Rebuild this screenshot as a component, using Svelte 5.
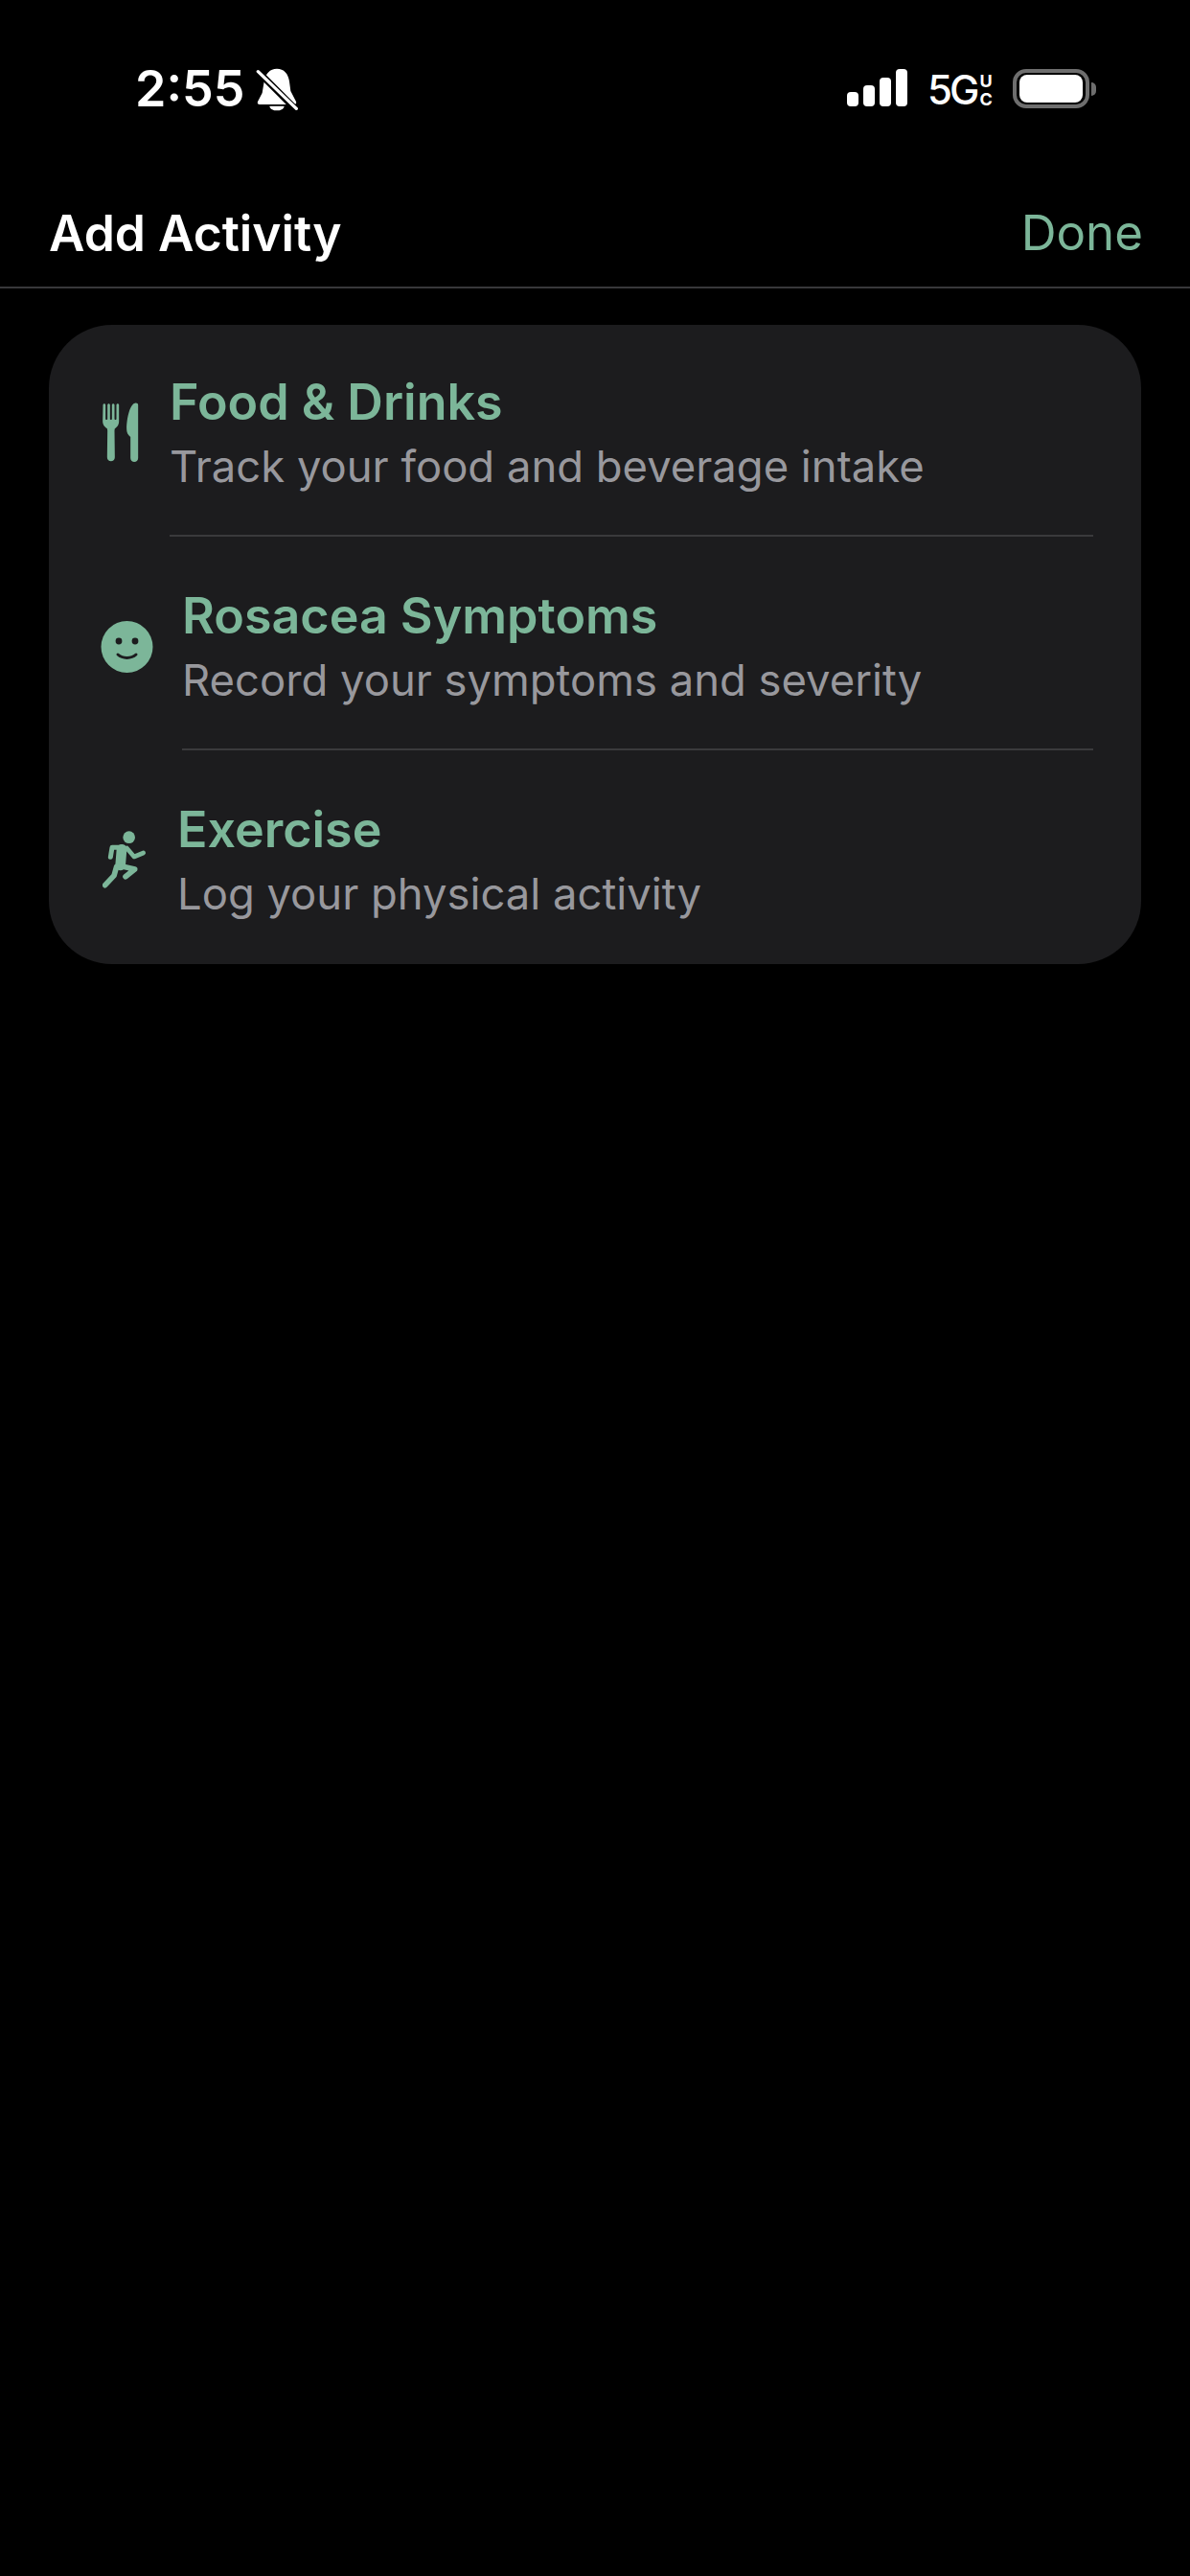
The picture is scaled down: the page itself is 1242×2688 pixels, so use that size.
<script lang="ts">
	const rows = [
		{ title: "Food & Drinks", sub: "Track your food and beverage intake", icon: "fork" },
		{ title: "Rosacea Symptoms", sub: "Record your symptoms and severity", icon: "smile" },
		{ title: "Exercise", sub: "Log your physical activity", icon: "run" }
	];
</script>

<div class="screen">
	<div class="status">
		<div class="left">
			<span class="time">2:55</span>
			<svg class="bell" viewBox="500 90 135 135">
				<path d="M566 92c22 0 36 16 39 40l4 30 17 33c2 5 0 9-6 9H512c-6 0-8-4-6-9l14-27 6-36c4-24 18-40 40-40z" fill="#fff" />
				<path d="M543 209h46c-2 10-12 14-23 14s-21-4-23-14z" fill="#fff" />
				<path d="M498 92L630 224" stroke="#000" stroke-width="21" />
				<path d="M507 101L627 217" stroke="#fff" stroke-width="10" stroke-linecap="round" />
			</svg>
		</div>
		<div class="right">
			<div class="signal">
				<i class="b1"></i><i class="b2"></i><i class="b3"></i><i class="b4"></i>
			</div>
			<div class="net">
				<span class="fiveg">5G</span>
				<span class="uc"><span>U</span><span>C</span></span>
			</div>
			<div class="battery"><div class="cell"><div class="charge"></div></div><div class="nub"></div></div>
		</div>
	</div>

	<header>
		<h1>Add Activity</h1>
		<span class="done">Done</span>
	</header>

	<main>
		<section class="card">
			{#each rows as row}
				<div class="row {row.icon}">
					<div class="icon">
						{#if row.icon === "fork"}
							<svg width="38" height="62" viewBox="232 297 111 186">
								<path d="M232 305c0-6 8-6 8 0v44c0 3 6 3 6 0v-44c0-6 8-6 8 0v44c0 3 6 3 6 0v-44c0-6 8-6 8 0v44c0 3 6 3 6 0v-44c0-6 8-6 8 0v50c0 14-7 20-13 24l-1 6 1 84c0 16-24 16-24 0l1-84-1-6c-6-4-14-10-14-24z" fill="currentColor" />
								<path d="M342 305v166c0 16-24 16-24 0v-66c-8-6-12-14-12-24 0-40 12-80 26-82 6-1 10 1 10 6z" fill="currentColor" />
							</svg>
						{:else if row.icon === "smile"}
							<svg width="55" height="56" viewBox="0 0 55 56">
								<circle cx="27.500" cy="28" r="27" fill="currentColor" />
								<circle cx="19" cy="22" r="3.400" fill="#1c1c1e" />
								<circle cx="36" cy="22" r="3.400" fill="#1c1c1e" />
								<path d="M18 36c5 4.500 14 4.500 19 0" fill="none" stroke="#1c1c1e" stroke-width="3" stroke-linecap="round" />
							</svg>
						{:else}
							<svg width="46" height="60" viewBox="232 230 138 180">
								<circle cx="315" cy="250" r="19" fill="currentColor" />
								<g fill="none" stroke="currentColor" stroke-linecap="round" stroke-linejoin="round">
									<path d="M298 282H262L257 312" stroke-width="15" />
									<path d="M308 284L331 311L360 299" stroke-width="14" />
									<path d="M292 288L288 338" stroke-width="32" />
									<path d="M290 340L333 350L304 373" stroke-width="17" />
									<path d="M276 342L268 370L240 400" stroke-width="17" />
								</g>
							</svg>
						{/if}
					</div>
					<div class="text">
						<div class="title">{row.title}</div>
						<div class="sub">{row.sub}</div>
					</div>
				</div>
			{/each}
		</section>
	</main>
</div>

<style>
	:global(body) {
		background: #000;
	}

	.screen {
		width: 1242px;
		height: 2688px;
		background: #000;
		font-family: Inter, "Liberation Sans", sans-serif;
		overflow: hidden;
	}

	.status {
		height: 186px;
		box-sizing: border-box;
		padding: 72px 98px 0 141px;
		display: flex;
		justify-content: space-between;
		align-items: flex-start;
		color: #fff;
	}

	.left {
		display: flex;
		align-items: center;
		gap: 12px;
		height: 42px;
	}

	.time {
		font-size: 52px;
		font-weight: 600;
		line-height: 42px;
	}

	.bell {
		width: 45px;
		height: 45px;
	}

	.right {
		display: flex;
		align-items: flex-start;
	}

	.signal {
		display: flex;
		align-items: flex-end;
		gap: 5px;
		height: 39px;
		width: 63px;
	}

	.signal i {
		width: 12px;
		background: #fff;
		border-radius: 4px;
	}

	.b1 { height: 15px; }
	.b2 { height: 22px; }
	.b3 { height: 30px; }
	.b4 { height: 39px; }

	.net {
		display: flex;
		margin-left: 21px;
		margin-top: 5px;
		gap: 3px;
		height: 34px;
		width: 89px;
	}

	.fiveg {
		font-size: 42px;
		font-weight: 500;
		line-height: 34px;
		letter-spacing: -3px;
	}

	.uc {
		display: flex;
		flex-direction: column;
		justify-content: space-between;
		font-size: 18px;
		font-weight: 700;
		line-height: 15px;
	}

	.battery {
		display: flex;
		align-items: center;
		height: 41px;
	}

	.cell {
		width: 80px;
		height: 41px;
		box-sizing: border-box;
		border: 4px solid #6e6e6e;
		border-radius: 14px;
		padding: 2px 3px;
	}

	.charge {
		height: 100%;
		background: #fff;
		border-radius: 8px;
	}

	.nub {
		width: 5px;
		height: 14px;
		margin-left: 2px;
		background: #6e6e6e;
		border-radius: 0 7px 7px 0;
	}

	header {
		height: 115px;
		box-sizing: border-box;
		display: flex;
		justify-content: space-between;
		align-items: center;
		padding: 0 49px 0 51px;
		border-bottom: 2px solid #38383a;
	}

	h1 {
		margin: 0;
		font-size: 51.5px;
		font-weight: 600;
		color: #fff;
	}

	.done {
		font-size: 51px;
		color: #7cb699;
	}

	main {
		padding: 38px 51px 0;
	}

	.card {
		background: #1c1c1e;
		border-radius: 66px;
		padding-left: 54px;
		padding-right: 50px;
	}

	.row {
		display: flex;
		align-items: center;
		gap: 30px;
		color: #7cb699;
	}

	.row .icon {
		display: flex;
		justify-content: center;
		align-items: center;
		flex: none;
	}

	.fork .icon { width: 42px; margin-top: 2px; }
	.smile .icon { width: 55px; margin-top: 6px; }
	.run .icon { width: 50px; margin-top: 4px; }

	.text {
		flex: 1;
		border-bottom: 2px solid #3a3a3c;
		padding: 50px 0 39px;
	}

	.fork .text { padding: 48px 0 39px; }
	.run .text { border-bottom: none; padding-bottom: 41px; }

	.title {
		font-size: 52px;
		font-weight: 600;
		line-height: 65px;
	}

	.sub {
		font-size: 45.4px;
		line-height: 65px;
		margin-top: 2px;
		color: #98989d;
	}
</style>
